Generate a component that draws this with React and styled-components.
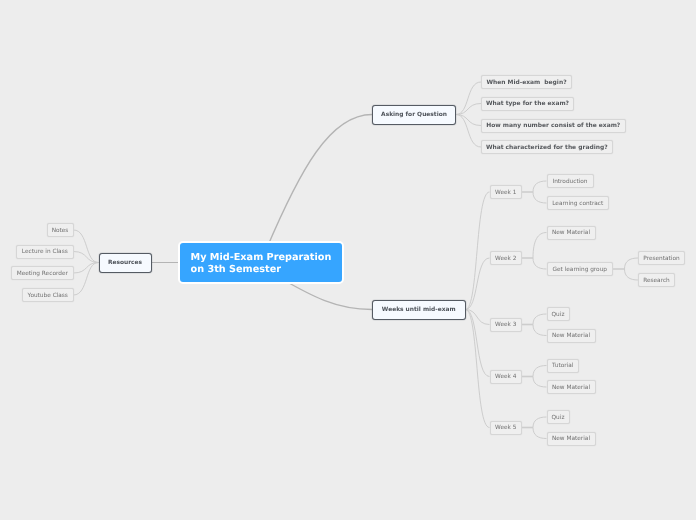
import React from 'react';
import styled, {createGlobalStyle, css} from 'styled-components';

const GlobalStyle = createGlobalStyle`
  html, body {
    margin: 0;
    background: #ededed;
  }
`;

// the whole map is a bit soft, like a scaled-down export
const Canvas = styled.div`
  position: relative;
  width: 696px;
  height: 520px;
  overflow: hidden;
  background: #ededed;
  font-family: "DejaVu Sans", Verdana, sans-serif;
  text-rendering: geometricPrecision;
  filter: blur(0.3px);
`;

const Links = styled.svg`
  position: absolute;
  left: 0;
  top: 0;
  fill: none;
`;

const variants = {
  root: css`
    background: #36a5ff;
    border: 2px solid #fff;
    border-radius: 5px;
    color: #fff;
    font-size: 9.7px;
    font-weight: 700;
    line-height: 12px;
    justify-content: flex-start;
    padding: 3px 0 0 10.5px;
  `,
  main: css`
    background: #f6faff;
    border: 1px solid #555b63;
    border-radius: 3px;
    box-shadow: 0 0 1px #555b63;
    color: #4d5259;
    font-size: 5.9px;
    font-weight: 700;
  `,
  question: css`
    background: #efefef;
    border: 1px solid #d6d6d6;
    border-radius: 2px;
    box-shadow: 0 0 1px #cfcfcf;
    color: #55585c;
    font-size: 5.95px;
    font-weight: 700;
    padding-top: 0.5px;
  `,
  leaf: css`
    background: #efefef;
    border: 1px solid #d6d6d6;
    border-radius: 2px;
    box-shadow: 0 0 1px #cfcfcf;
    color: #707070;
    font-size: 5.8px;
    padding-top: 1px;
  `,
};

const Node = styled.div`
  position: absolute;
  left: ${p => p.$x}px;
  top: ${p => p.$y}px;
  width: ${p => p.$w}px;
  height: ${p => p.$h}px;
  box-sizing: border-box;
  display: flex;
  align-items: center;
  justify-content: center;
  white-space: pre;
  ${p => variants[p.$kind]}
`;

const nodes = [
  {kind: 'root', x: 178, y: 240.5, w: 165.5, h: 43, text: 'My Mid-Exam Preparation\non 3th Semester'},
  {kind: 'main', x: 372, y: 104.5, w: 84, h: 20, text: 'Asking for Question'},
  {kind: 'main', x: 98.5, y: 252.5, w: 53, h: 20, text: 'Resources'},
  {kind: 'main', x: 372, y: 299.5, w: 93.5, h: 20, text: 'Weeks until mid-exam'},

  {kind: 'leaf', x: 46.5, y: 223, w: 27, h: 14, text: 'Notes'},
  {kind: 'leaf', x: 16, y: 244.5, w: 57.5, h: 14, text: 'Lecture in Class'},
  {kind: 'leaf', x: 11, y: 266, w: 62.5, h: 14, text: 'Meeting Recorder'},
  {kind: 'leaf', x: 22, y: 288, w: 51.5, h: 14, text: 'Youtube Class'},

  {kind: 'question', x: 481, y: 75, w: 91, h: 14, text: 'When Mid-exam  begin?'},
  {kind: 'question', x: 481, y: 96.5, w: 93, h: 14, text: 'What type for the exam?'},
  {kind: 'question', x: 481, y: 118.5, w: 144.5, h: 14, text: 'How many number consist of the exam?'},
  {kind: 'question', x: 481, y: 140, w: 131.5, h: 14, text: 'What characterized for the grading?'},

  {kind: 'leaf', x: 489.5, y: 185, w: 32.5, h: 14, text: 'Week 1'},
  {kind: 'leaf', x: 546.5, y: 174, w: 47, h: 14, text: 'Introduction'},
  {kind: 'leaf', x: 546.5, y: 196, w: 62.5, h: 14, text: 'Learning contract'},
  {kind: 'leaf', x: 489.5, y: 251, w: 32.5, h: 14, text: 'Week 2'},
  {kind: 'leaf', x: 546.5, y: 225.5, w: 49, h: 14, text: 'New Material'},
  {kind: 'leaf', x: 546.5, y: 262, w: 66.5, h: 14, text: 'Get learning group'},
  {kind: 'leaf', x: 638, y: 251, w: 47, h: 14, text: 'Presentation'},
  {kind: 'leaf', x: 638, y: 273, w: 37, h: 14, text: 'Research'},
  {kind: 'leaf', x: 489.5, y: 317.5, w: 32.5, h: 14, text: 'Week 3'},
  {kind: 'leaf', x: 546.5, y: 307, w: 23, h: 14, text: 'Quiz'},
  {kind: 'leaf', x: 546.5, y: 328.5, w: 49, h: 14, text: 'New Material'},
  {kind: 'leaf', x: 489.5, y: 369.5, w: 32.5, h: 14, text: 'Week 4'},
  {kind: 'leaf', x: 546.5, y: 358.5, w: 32.5, h: 14, text: 'Tutorial'},
  {kind: 'leaf', x: 546.5, y: 380, w: 49, h: 14, text: 'New Material'},
  {kind: 'leaf', x: 489.5, y: 420.5, w: 32.5, h: 14, text: 'Week 5'},
  {kind: 'leaf', x: 546.5, y: 410, w: 23, h: 14, text: 'Quiz'},
  {kind: 'leaf', x: 546.5, y: 431.5, w: 49, h: 14, text: 'New Material'},
];

// fan from a parent's edge to the middle of a child's edge
const fan = (x1, y1, x2, y2) => {
  const dx = x2 - x1;
  return `M${x1} ${y1} C${x1 + dx * 0.55} ${y1} ${x1 + dx * 0.4} ${y2} ${x2} ${y2}`;
};

// curved arms of a fork, the stem is drawn on its own
const arms = (xFork, y1, x2, ys) =>
  ys
    .map(y => `M${xFork} ${y1} C${xFork} ${y1 + (y - y1) * 0.7} ${xFork + 5} ${y} ${x2} ${y}`)
    .join(' ');

const forks = [
  {x1: 522, xFork: 533, x2: 546.5, y: 192, ys: [181, 203]},
  {x1: 522, xFork: 533, x2: 546.5, y: 258, ys: [232.5, 269]},
  {x1: 613, xFork: 624.5, x2: 638, y: 269, ys: [258, 280]},
  {x1: 522, xFork: 533, x2: 546.5, y: 324.5, ys: [314, 335.5]},
  {x1: 522, xFork: 533, x2: 546.5, y: 376.5, ys: [365.5, 387]},
  {x1: 522, xFork: 533, x2: 546.5, y: 427.5, ys: [417, 438.5]},
];

const thinLinks = [
  ...[230, 251.5, 273, 295].map(y => fan(98.5, 262.5, 73.5, y)),
  ...[82, 103.5, 125.5, 147].map(y => fan(456, 114.5, 481, y)),
  ...[192, 258, 324.5, 376.5, 427.5].map(y => fan(465.5, 309.5, 489.5, y)),
  ...forks.map(f => arms(f.xFork, f.y, f.x2, f.ys)),
];

export default function App() {
  return (
    <Canvas>
      <GlobalStyle />
      <Links width="696" height="520" viewBox="0 0 696 520">
        <g stroke="#b4b4b4" strokeWidth="1.3">
          <path d="M266 250 C300 170 330 114.5 372 114.5" />
          <path d="M280 278 C310 295 335 309.5 372 309.5" />
          <path d="M151.5 262.5 H179" strokeWidth="1" />
        </g>
        <g stroke="#cdcdcd" strokeWidth="1">
          {thinLinks.map((d, i) => (
            <path key={i} d={d} />
          ))}
        </g>
        <g stroke="#cdcdcd" strokeWidth="1.6">
          {forks.map((f, i) => (
            <path key={i} d={`M${f.x1} ${f.y} H${f.xFork}`} />
          ))}
        </g>
      </Links>
      {nodes.map((n, i) => (
        <Node key={i} $kind={n.kind} $x={n.x} $y={n.y} $w={n.w} $h={n.h}>
          {n.text}
        </Node>
      ))}
    </Canvas>
  );
}
